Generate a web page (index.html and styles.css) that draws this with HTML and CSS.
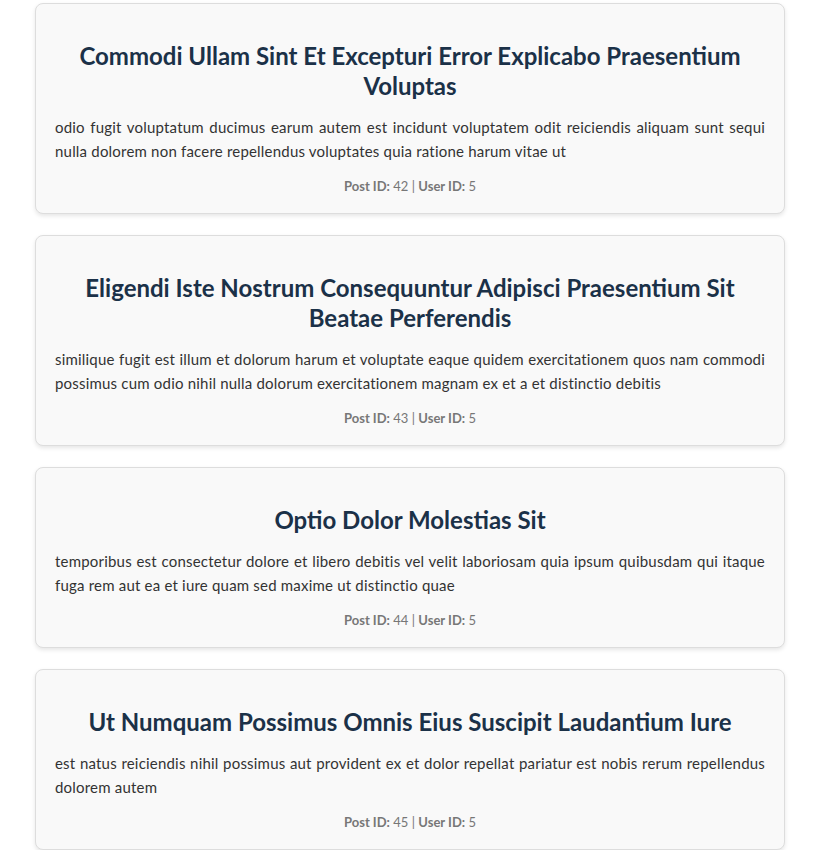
FILE: index.html
```html
<!DOCTYPE html>
<html lang="en">
<head>
<meta charset="utf-8">
<title>Posts</title>
<link rel="stylesheet" href="styles.css">
</head>
<body>
<main class="posts">
  <article class="card">
    <h2 class="card-title">Commodi Ullam Sint Et Excepturi Error Explicabo Praesentium Voluptas</h2>
    <p class="card-body">odio fugit voluptatum ducimus earum autem est incidunt voluptatem odit reiciendis aliquam sunt sequi nulla dolorem non facere repellendus voluptates quia ratione harum vitae ut</p>
    <p class="card-meta"><strong>Post ID:</strong> 42 | <strong>User ID:</strong> 5</p>
  </article>
  <article class="card">
    <h2 class="card-title">Eligendi Iste Nostrum Consequuntur Adipisci Praesentium Sit Beatae Perferendis</h2>
    <p class="card-body">similique fugit est illum et dolorum harum et voluptate eaque quidem exercitationem quos nam commodi possimus cum odio nihil nulla dolorum exercitationem magnam ex et a et distinctio debitis</p>
    <p class="card-meta"><strong>Post ID:</strong> 43 | <strong>User ID:</strong> 5</p>
  </article>
  <article class="card">
    <h2 class="card-title">Optio Dolor Molestias Sit</h2>
    <p class="card-body">temporibus est consectetur dolore et libero debitis vel velit laboriosam quia ipsum quibusdam qui itaque fuga rem aut ea et iure quam sed maxime ut distinctio quae</p>
    <p class="card-meta"><strong>Post ID:</strong> 44 | <strong>User ID:</strong> 5</p>
  </article>
  <article class="card">
    <h2 class="card-title">Ut Numquam Possimus Omnis Eius Suscipit Laudantium Iure</h2>
    <p class="card-body">est natus reiciendis nihil possimus aut provident ex et dolor repellat pariatur est nobis rerum repellendus dolorem autem</p>
    <p class="card-meta"><strong>Post ID:</strong> 45 | <strong>User ID:</strong> 5</p>
  </article>
</main>
</body>
</html>
```
FILE: styles.css
```css
html, body {
  margin: 0;
  padding: 0;
  background: #ffffff;
}

body {
  font-family: "Segoe UI", Lato, "Noto Sans", sans-serif;
}

.posts {
  width: 750px;
  margin: 0 0 0 35px;
  padding-top: 3px;
  display: flex;
  flex-direction: column;
  gap: 21px;
}

.card {
  background: #f9f9f9;
  border: 1px solid #dddddd;
  border-radius: 8px;
  box-shadow: 0 2px 4px rgba(0, 0, 0, 0.1);
  padding: 20px 19px 17px;
}

.card-title {
  margin: 17px 0 14px;
  font-size: 24px;
  line-height: 30px;
  font-weight: 700;
  color: #1b3148;
  text-align: center;
}

.card-body {
  margin: 0 0 13px;
  font-size: 15px;
  line-height: 24px;
  letter-spacing: 0.2px;
  color: #333333;
  text-align: justify;
}

.card-meta {
  margin: 0;
  font-size: 13px;
  line-height: 20px;
  color: #777777;
  text-align: center;
}

.card-meta strong {
  font-weight: 700;
}
```
